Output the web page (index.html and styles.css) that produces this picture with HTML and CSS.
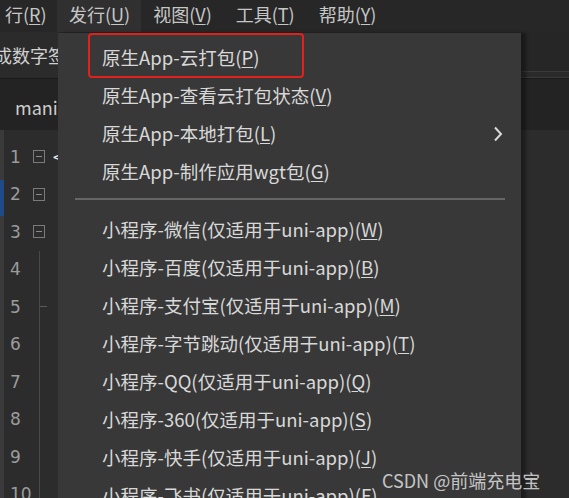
FILE: index.html
```html
<!DOCTYPE html>
<html lang="zh-CN">
<head>
    <meta charset="UTF-8">
    <meta name="viewport" content="width=device-width, initial-scale=1.0">
    <title>HBuilderX 发行菜单</title>
    <link rel="stylesheet" href="styles.css">
</head>
<body>
    <div class="menubar">
        <div class="menu first">行(<u>R</u>)</div>
        <div class="menu open">发行(<u>U</u>)</div>
        <div class="menu">视图(<u>V</u>)</div>
        <div class="menu">工具(<u>T</u>)</div>
        <div class="menu">帮助(<u>Y</u>)</div>
    </div>

    <div class="editor">
        <div class="toolbar">
            <div class="toolbar-left"><span class="toolbar-text">成数字签名</span></div>
            <div class="toolbar-right"></div>
        </div>
        <div class="tabs">
            <span class="tab">manifest.json</span>
        </div>
        <div class="code">
            <div class="side"><span class="side-sel"></span></div>
            <div class="gutter">
                <div class="line"><span class="num">1</span><span class="fold"></span></div>
                <div class="line"><span class="num">2</span><span class="fold"></span></div>
                <div class="line"><span class="num">3</span><span class="fold"></span></div>
                <div class="line guide"><span class="num">4</span></div>
                <div class="line guide tick"><span class="num">5</span></div>
                <div class="line guide"><span class="num">6</span></div>
                <div class="line guide"><span class="num">7</span></div>
                <div class="line guide"><span class="num">8</span></div>
                <div class="line guide"><span class="num">9</span></div>
                <div class="line guide"><span class="num">10</span></div>
            </div>
            <div class="source"><span class="bracket">&lt;</span></div>
        </div>
    </div>

    <div class="dropdown">
        <div class="item">原生App-云打包(<u>P</u>)</div>
        <div class="item">原生App-查看云打包状态(<u>V</u>)</div>
        <div class="item">原生App-本地打包(<u>L</u>)
            <svg class="chevron" width="10" height="16" viewBox="0 0 10 16"><path d="M2 1.5 L8 8 L2 14.5" fill="none" stroke="#d8d8d8" stroke-width="2"/></svg>
        </div>
        <div class="item">原生App-制作应用wgt包(<u>G</u>)</div>
        <div class="sep"></div>
        <div class="item">小程序-微信(仅适用于uni-app)(<u>W</u>)</div>
        <div class="item">小程序-百度(仅适用于uni-app)(<u>B</u>)</div>
        <div class="item">小程序-支付宝(仅适用于uni-app)(<u>M</u>)</div>
        <div class="item">小程序-字节跳动(仅适用于uni-app)(<u>T</u>)</div>
        <div class="item">小程序-QQ(仅适用于uni-app)(<u>Q</u>)</div>
        <div class="item">小程序-360(仅适用于uni-app)(<u>S</u>)</div>
        <div class="item">小程序-快手(仅适用于uni-app)(<u>J</u>)</div>
        <div class="item">小程序-飞书(仅适用于uni-app)(<u>F</u>)</div>
        <div class="mark"></div>
    </div>

    <div class="watermark">CSDN @前端充电宝</div>
</body>
</html>
```

FILE: styles.css
```css
body {
    margin: 0;
    padding: 0;
    background: #1e1f1e;
    color: #d6d6d6;
    font-family: "Noto Sans CJK SC", "Noto Sans", sans-serif;
    overflow: hidden;
    height: 498px;
}
u {
    text-decoration-thickness: 1px;
    text-underline-offset: 2px;
}

/* top menu bar */
.menubar {
    display: flex;
    height: 32px;
    background: #272727;
    font-size: 18px;
    color: #c6c6c6;
}
.menu {
    padding: 0 12px;
    line-height: 28px;
    white-space: nowrap;
}
.menu.first {
    width: 40px;
    padding: 0 12px 0 5px;
    overflow: hidden;
}
.menu.open {
    padding: 0 11px 0 12px;
    background: #303030;
}

/* editor behind the menu */
.editor {
    display: flex;
    flex-direction: column;
    height: 466px;
}
.toolbar {
    display: flex;
    height: 46px;
    background: #2b2b2b;
}
.toolbar-left {
    width: 58px;
    overflow: hidden;
}
.toolbar-text {
    display: block;
    margin-left: -6px;
    white-space: nowrap;
    font-size: 18px;
    line-height: 46px;
    color: #d0d0d0;
}
.toolbar-right {
    flex: 1;
    background: #252625;
    border-bottom: 1px solid #3a3a3a;
    box-shadow: inset 0 -5px 0 #2a2a2a, inset 0 -6px 0 #3a3a3a;
}
.tabs {
    height: 51px;
    background: #232323;
    border-top: 1px solid #1a1a1a;
}
.tab {
    display: inline-block;
    padding-left: 15px;
    font-size: 18px;
    line-height: 56px;
    color: #cfcfcf;
}
.code {
    flex: 1;
    display: flex;
}
.side {
    width: 4px;
    background: #3a3a3a;
}
.side-sel {
    display: block;
    margin-top: 50px;
    height: 36px;
    background: #1f4a8a;
}
.gutter {
    width: 46px;
    background: #2c2c2c;
    padding-top: 8px;
}
.line {
    height: 37.5px;
    display: flex;
    align-items: center;
    position: relative;
}
.num {
    width: 23px;
    padding-left: 6px;
    color: #9c9c9c;
    font-family: "DejaVu Sans", sans-serif;
    font-size: 17px;
}
.fold {
    width: 10px;
    height: 11px;
    border: 1px solid #7a7a7a;
    position: relative;
}
.fold::after {
    content: "";
    position: absolute;
    left: 2px;
    right: 2px;
    top: 5px;
    height: 1px;
    background: #8a8a8a;
}
.guide::before {
    content: "";
    position: absolute;
    left: 35px;
    top: 0;
    bottom: 0;
    width: 1px;
    background: #4a4a4a;
}
.tick::after {
    content: "";
    position: absolute;
    left: 36px;
    top: 18px;
    width: 7px;
    height: 1px;
    background: #5a5a5a;
}
.source {
    flex: 1;
    background: #2c2c2c;
    padding-top: 8px;
}
.bracket {
    display: block;
    margin-left: 3px;
    line-height: 37px;
    font-size: 16px;
    color: #eee;
}

/* publish dropdown */
.dropdown {
    position: absolute;
    left: 58px;
    top: 33px;
    width: 463px;
    height: 480px;
    padding-top: 5px;
    background: #383838;
    box-shadow: 5px 0 3px rgba(0, 0, 0, 0.35);
}
.item {
    height: 38px;
    display: flex;
    align-items: center;
    padding-left: 44px;
    font-size: 18.5px;
    color: #d8d8d8;
    white-space: nowrap;
    position: relative;
}
.chevron {
    position: absolute;
    right: 18px;
    top: 12px;
}
.sep {
    height: 2px;
    margin: 8px 16px 10px 17px;
    background: #666;
}
.mark {
    position: absolute;
    left: 30px;
    top: 0;
    width: 212px;
    height: 41px;
    border: 2px solid #e3211c;
    border-radius: 4px;
}

.watermark {
    position: absolute;
    left: 382px;
    top: 467px;
    font-size: 18px;
    color: rgba(235, 235, 235, 0.8);
    white-space: nowrap;
}
```
